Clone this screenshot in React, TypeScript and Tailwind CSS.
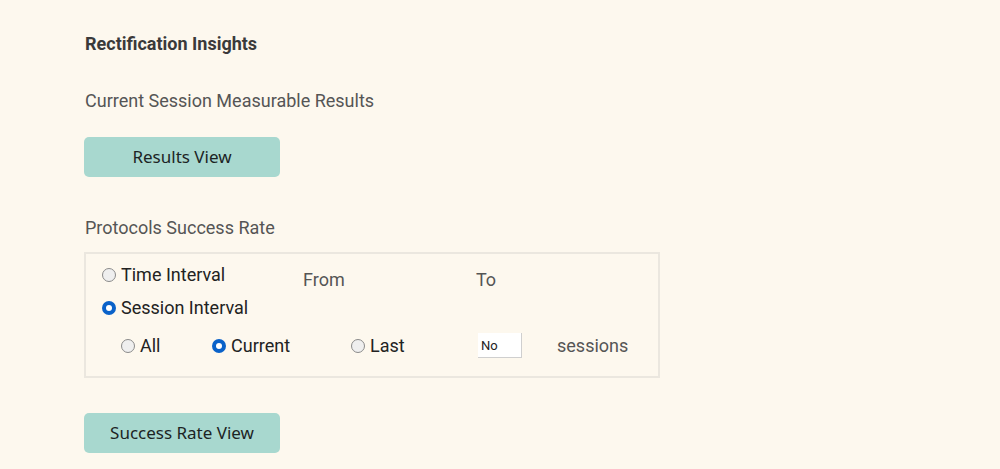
import React from 'react';

const Radio: React.FC<{ checked?: boolean }> = ({ checked }) =>
  checked ? (
    <span className="flex w-[14px] h-[14px] rounded-full bg-[#0a62c9] items-center justify-center shrink-0">
      <span className="block w-[6px] h-[6px] rounded-full bg-white" />
    </span>
  ) : (
    <span className="block w-[14px] h-[14px] rounded-full border border-[#8a8a8a] bg-[#efefef] shrink-0" />
  );

const Option: React.FC<{ label: string; checked?: boolean; className?: string }> = ({ label, checked, className }) => (
  <label className={`flex items-center gap-[5px] text-[18px] leading-[24px] text-[#222] ${className ?? ''}`}>
    <Radio checked={checked} />
    <span>{label}</span>
  </label>
);

const ActionButton: React.FC<{ children: React.ReactNode; className?: string }> = ({ children, className }) => (
  <button
    className={`block w-[196px] h-[40px] rounded-[5px] bg-[#a8d8cf] text-[17px] text-[#1c2424] ${className ?? ''}`}
    style={{ fontFamily: '"Noto Sans", "Open Sans", sans-serif' }}
  >
    {children}
  </button>
);

export default function App() {
  return (
    <div
      className="w-[1000px] h-[469px] bg-[#fdf8ee] pl-[84px] pt-[32px] overflow-hidden"
      style={{ fontFamily: 'Roboto, "Liberation Sans", sans-serif' }}
    >
      <h2 className="pl-px text-[18px] leading-[24px] font-bold text-[#3a3a3a]">Rectification Insights</h2>
      <p className="pl-px mt-[33px] text-[18px] leading-[24px] text-[#555]">Current Session Measurable Results</p>
      <ActionButton className="mt-[24px]">Results View</ActionButton>

      <p className="pl-px mt-[39px] text-[18px] leading-[24px] text-[#555]">Protocols Success Rate</p>

      {/* interval box */}
      <div className="mt-[12px] w-[576px] h-[126px] border-2 border-[#ebe7df] pl-[16px] pt-[9px]">
        <div className="flex">
          <div className="w-[201px] flex flex-col gap-[9px]">
            <Option label="Time Interval" />
            <Option label="Session Interval" checked />
          </div>
          <span className="w-[173px] mt-[5px] text-[18px] leading-[24px] text-[#555]">From</span>
          <span className="mt-[5px] text-[18px] leading-[24px] text-[#555]">To</span>
        </div>
        <div className="flex items-center pl-[19px] mt-[13px]">
          <Option label="All" className="w-[91px]" />
          <Option label="Current" checked className="w-[139px]" />
          <Option label="Last" className="w-[127px]" />
          <input
            defaultValue="No"
            className="w-[44px] h-[25px] bg-white px-[3px] text-[13px] text-[#222] border-r border-b border-[#cfcfcf] outline-none"
          />
          <span className="ml-[35px] text-[18px] leading-[24px] text-[#555]">sessions</span>
        </div>
      </div>

      <ActionButton className="mt-[35px]">Success Rate View</ActionButton>
    </div>
  );
}
